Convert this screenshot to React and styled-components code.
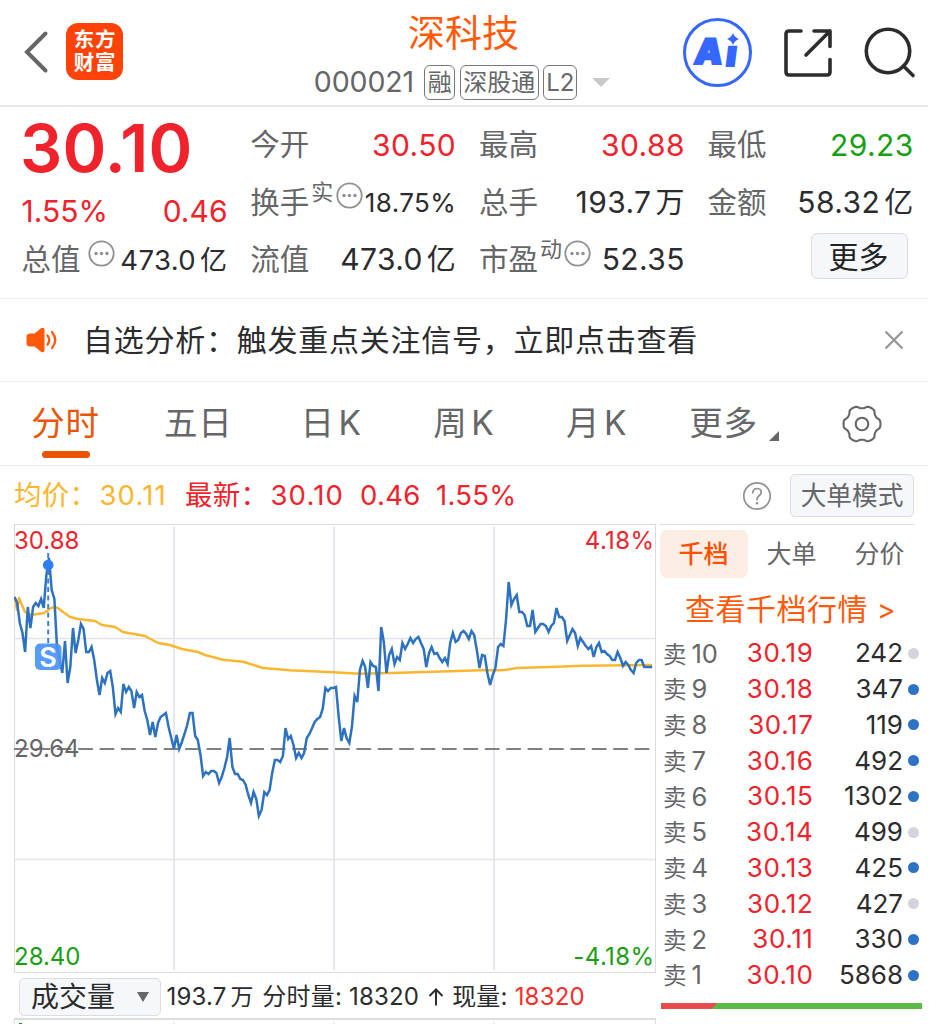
import styled, { createGlobalStyle } from 'styled-components'

const GlobalStyle = createGlobalStyle`
  * {
    box-sizing: border-box;
  }
  body {
    margin: 0;
    background: #fff;
    overflow: hidden;
    font-family: 'Inter', 'Noto Sans CJK SC', sans-serif;
    color: #2b2c2e;
  }
`

const RED = '#f0222b'
const GREEN = '#17a012'
const GRAY = '#656668'

// one value per trading minute, pixels below the top of the chart
const MINUTES = [
  73, 79, 99, 109, 128, 83, 104, 83, 79, 82, 75, 84, 51, 34, 66, 75, 123, 136, 149, 117,
  159, 143, 104, 129, 116, 100, 105, 128, 128, 123, 136, 156, 171, 154, 159, 149, 147, 163, 190, 184,
  188, 160, 168, 163, 167, 184, 168, 173, 171, 187, 196, 211, 198, 213, 199, 193, 191, 189, 203, 214,
  225, 211, 225, 218, 210, 201, 189, 189, 212, 216, 231, 252, 248, 250, 247, 247, 249, 259, 253, 244,
  233, 214, 243, 250, 250, 255, 256, 261, 271, 279, 268, 275, 292, 286, 268, 271, 266, 249, 236, 236,
  238, 232, 204, 215, 212, 221, 234, 229, 234, 229, 214, 210, 204, 198, 195, 193, 185, 164, 167, 164,
  164, 163, 193, 217, 204, 214, 219, 203, 172, 178, 146, 137, 143, 164, 138, 142, 143, 167, 103, 118,
  149, 131, 125, 140, 133, 136, 119, 125, 120, 114, 119, 115, 113, 119, 125, 143, 129, 123, 130, 129,
  134, 138, 134, 140, 119, 109, 118, 116, 109, 107, 110, 115, 107, 111, 126, 144, 131, 132, 149, 161,
  151, 144, 123, 120, 122, 96, 58, 81, 75, 71, 88, 88, 91, 102, 102, 86, 108, 104, 100, 100,
  102, 108, 102, 99, 84, 93, 93, 97, 117, 111, 105, 109, 122, 114, 118, 122, 125, 122, 133, 123,
  119, 128, 127, 130, 132, 136, 136, 128, 134, 142, 138, 141, 146, 149, 139, 136, 136, 143, 143, 143, 143,
]

const AVERAGE =
  '1,74 3,86 5,74 7,79 11,88 17,91 30,89 38,83.5 43,83.5 56,93 64,95 81,97 88,101 101,103 109,108 131,112 144,119 156,121 168,125 184,128 191,131 209,135.7 229,137.7 249,144 276,146.3 319,148.3 346,149.7 386,148.7 436,147.3 466,146.3 489,146.3 503,144 543,142.7 569,141.7 638,141'

const ASKS = [
  { level: 10, price: '30.19', volume: 242, active: false },
  { level: 9, price: '30.18', volume: 347, active: true },
  { level: 8, price: '30.17', volume: 119, active: true },
  { level: 7, price: '30.16', volume: 492, active: true },
  { level: 6, price: '30.15', volume: 1302, active: true },
  { level: 5, price: '30.14', volume: 499, active: false },
  { level: 4, price: '30.13', volume: 425, active: true },
  { level: 3, price: '30.12', volume: 427, active: false },
  { level: 2, price: '30.11', volume: 330, active: true },
  { level: 1, price: '30.10', volume: 5868, active: true },
]

const TABS = [
  { text: '分时' },
  { text: '五日' },
  { text: '日', suffix: 'K' },
  { text: '周', suffix: 'K' },
  { text: '月', suffix: 'K' },
]

const MoreDots = () => (
  <DotsIcon width="27" height="27" viewBox="0 0 27 27">
    <circle cx="13.5" cy="13.5" r="12.2" fill="none" stroke="#8f9092" strokeWidth="1.8" />
    <circle cx="8" cy="13.5" r="1.7" fill="#8f9092" />
    <circle cx="13.5" cy="13.5" r="1.7" fill="#8f9092" />
    <circle cx="19" cy="13.5" r="1.7" fill="#8f9092" />
  </DotsIcon>
)

const TopBar = () => (
  <Header>
    <HeaderSide>
      <svg width="26" height="44" viewBox="0 0 26 44">
        <path d="M22.5 3.500 L4 22 L22.500 40.500" fill="none" stroke="#656668" strokeWidth="4" strokeLinecap="round" strokeLinejoin="miter" />
      </svg>
      <Logo>
        <span>东方</span>
        <span>财富</span>
      </Logo>
    </HeaderSide>
    <Title>
      <StockName>深科技</StockName>
      <StockMeta>
        <Code>000021</Code>
        <Badge $width={31}>融</Badge>
        <Badge $width={79}>深股通</Badge>
        <Badge $width={34}>L2</Badge>
        <svg width="18" height="9" viewBox="0 0 18 9">
          <path d="M0 0 H18 L9 9 Z" fill="#c9c9cb" />
        </svg>
      </StockMeta>
    </Title>
    <Actions>
      <AiButton>
        <AiText>A<span>ı</span></AiText>
        <AiStar width="12" height="12" viewBox="0 0 12 12">
          <path d="M6 0 Q7.6 4.4 12 6 Q7.6 7.6 6 12 Q4.4 7.6 0 6 Q4.4 4.4 6 0 Z" fill="#3566ff" />
        </AiStar>
      </AiButton>
      <svg width="50" height="50" viewBox="0 0 50 50" fill="none" stroke="#2b2c2e" strokeWidth="3.6" strokeLinecap="round" strokeLinejoin="round">
        <path d="M18 3 H6 Q3 3 3 6 V44 Q3 47 6 47 H44 Q47 47 47 44 V31.500" />
        <path d="M31 3 H47 V18.500 M47 3 L23 27" />
      </svg>
      <svg width="52" height="52" viewBox="0 0 52 52" fill="none" stroke="#2b2c2e" strokeWidth="3.6" strokeLinecap="round">
        <circle cx="24" cy="24" r="21.700" />
        <path d="M39.500 39 L49 48.500" />
      </svg>
    </Actions>
  </Header>
)

const Quote = () => (
  <QuotePanel>
    <QuoteColumn>
      <BigPrice>30.10</BigPrice>
      <Change>
        <span>1.55%</span>
        <span>0.46</span>
      </Change>
      <QuoteRow>
        <Label>总值</Label>
        <MoreDots />
        <Value $size={27.5} $low>473.0<Unit $size={27}>亿</Unit></Value>
      </QuoteRow>
    </QuoteColumn>
    <QuoteColumn>
      <QuoteRow>
        <Label>今开</Label>
        <Value $color={RED}>30.50</Value>
      </QuoteRow>
      <QuoteRow>
        <Label>换手<Sup>实</Sup></Label>
        <MoreDots />
        <Value $size={26} $low>18.75%</Value>
      </QuoteRow>
      <QuoteRow>
        <Label>流值</Label>
        <Value>473.0<Unit>亿</Unit></Value>
      </QuoteRow>
    </QuoteColumn>
    <QuoteColumn>
      <QuoteRow>
        <Label>最高</Label>
        <Value $color={RED}>30.88</Value>
      </QuoteRow>
      <QuoteRow>
        <Label>总手</Label>
        <Value>193.7<Unit>万</Unit></Value>
      </QuoteRow>
      <QuoteRow>
        <Label>市盈<Sup>动</Sup></Label>
        <MoreDots />
        <Value>52.35</Value>
      </QuoteRow>
    </QuoteColumn>
    <QuoteColumn>
      <QuoteRow>
        <Label>最低</Label>
        <Value $color={GREEN}>29.23</Value>
      </QuoteRow>
      <QuoteRow>
        <Label>金额</Label>
        <Value>58.32<Unit>亿</Unit></Value>
      </QuoteRow>
      <QuoteRow>
        <MoreButton>更多</MoreButton>
      </QuoteRow>
    </QuoteColumn>
  </QuotePanel>
)

const Notice = () => (
  <NoticeBar>
    <svg width="32" height="26" viewBox="0 0 32 26">
      <path d="M4 6.500 H8.500 L15 1.300 Q18.500 -0.500 18.500 3 V23 Q18.500 26.500 15 24.700 L8.500 19.500 H4 Q0.500 19.500 0.500 16 V10 Q0.500 6.500 4 6.500 Z" fill="#ff5a0a" />
      <path d="M21.500 8.500 Q25 13 21.500 17.500 M26 5 Q32.500 13 26 21" fill="none" stroke="#ff5a0a" strokeWidth="2.300" strokeLinecap="round" />
    </svg>
    <NoticeText>自选分析：触发重点关注信号，立即点击查看</NoticeText>
    <svg width="20" height="20" viewBox="0 0 20 20">
      <path d="M1.500 1.500 L18.500 18.500 M18.500 1.500 L1.500 18.500" stroke="#98999b" strokeWidth="2.400" />
    </svg>
  </NoticeBar>
)

// six rounded teeth with narrow notches between them
const gearPath = () => {
  const points = []
  for (let a = 0; a <= 360; a += 4) {
    const t = (a * Math.PI) / 180
    const r = 17 + 1.5 * Math.tanh(1.8 * Math.cos(6 * t) + 0.5)
    points.push(`${(20 + r * Math.cos(t)).toFixed(2)},${(20 + r * Math.sin(t)).toFixed(2)}`)
  }
  return points.join(' ')
}

const PeriodTabs = () => (
  <TabBar>
    {TABS.map((tab, i) => (
      <Tab key={tab.text} $active={i === 0}>
        {tab.text}
        {tab.suffix && <TabSuffix>{tab.suffix}</TabSuffix>}
      </Tab>
    ))}
    <MoreTab>
      更多
      <Corner width="10" height="10" viewBox="0 0 10 10">
        <path d="M10 0 V10 H0 Z" fill="#656668" />
      </Corner>
    </MoreTab>
    <Tab>
      <svg width="40" height="40" viewBox="0 0 40 40" fill="none" stroke="#656668" strokeWidth="2.100">
        <polygon points={gearPath()} strokeLinejoin="round" />
        <circle cx="20" cy="20" r="6.300" />
      </svg>
    </Tab>
  </TabBar>
)

const Summary = () => (
  <SummaryRow>
    <SummaryText $color="#fbb62f" $width={171}>均价：<b>30.11</b></SummaryText>
    <SummaryText $color={RED} $width={175}>最新：<b>30.10</b></SummaryText>
    <SummaryText $color={RED} $width={76}>0.46</SummaryText>
    <SummaryText $color={RED}>1.55%</SummaryText>
    <Help width="30" height="30" viewBox="0 0 30 30" fill="none" stroke="#8f9092" strokeWidth="1.700">
      <circle cx="15" cy="15" r="13.200" />
      <path d="M10.800 11.700 Q11 7.500 15.200 7.500 Q19.300 7.700 19.200 11.400 Q19.100 13.300 17 14.800 Q15 16.300 15 18.700" strokeLinecap="round" />
      <circle cx="15" cy="22.200" r="1.300" fill="#8f9092" stroke="none" />
    </Help>
    <ModeButton>大单模式</ModeButton>
  </SummaryRow>
)

const Chart = () => (
  <ChartBox>
    <svg width="642" height="449" viewBox="0 0 642 449" fill="none">
      <path d="M0 .5 H642 M0 448.500 H642" stroke="#d9dbdf" />
      <path d="M0 114.500 H642 M0 335.500 H642" stroke="#e2e4ea" strokeWidth="1.500" />
      <path d="M.5 0 V449 M641.500 0 V449" stroke="#d9dbdf" />
      <path d="M160 3 V446 M320 3 V446 M480 3 V446" stroke="#e4e5ea" strokeWidth="1.800" />
      <path d="M0 225 H637" stroke="#808080" strokeWidth="2" strokeDasharray="14.7 6.7" />
      <polyline points={AVERAGE} stroke="#fbb62f" strokeWidth="2.500" strokeLinejoin="round" />
      <polyline
        points={MINUTES.map((y, i) => `${(0.5 + i * 2.657).toFixed(1)},${y}`).join(' ')}
        stroke="#2d72c0"
        strokeWidth="2.500"
      />
      <path d="M34.200 29 V120" stroke="#3a80e0" strokeWidth="2" strokeDasharray="5 3.500" />
      <circle cx="34.200" cy="41" r="5.300" fill="#2f7df0" />
      <rect x="21" y="119.500" width="26.500" height="26.500" rx="5" fill="#4b93fa" fillOpacity=".92" />
      <SellMark x="34" y="142.500">S</SellMark>
    </svg>
    <AxisLabel $top={5} $color={RED}>30.88</AxisLabel>
    <AxisLabel $top={5} $color={RED} $right>4.18%</AxisLabel>
    <AxisLabel $top={212.5} $color={GRAY}>29.64</AxisLabel>
    <AxisLabel $top={420.5} $color={GREEN}>28.40</AxisLabel>
    <AxisLabel $top={420.5} $color={GREEN} $right>-4.18%</AxisLabel>
  </ChartBox>
)

const Volume = () => (
  <>
    <VolumeRow>
      <VolumeSelect>
        成交量
        <svg width="12" height="10" viewBox="0 0 12 10">
          <path d="M0 0 H12 L6 10 Z" fill="#656668" />
        </svg>
      </VolumeSelect>
      <VolumeText>193.7<Unit $size={23}>万</Unit></VolumeText>
      <VolumeText>分时量: 18320</VolumeText>
      <svg width="16" height="18" viewBox="0 0 16 18" fill="none" stroke="#2b2c2e" strokeWidth="2">
        <path d="M8 17.500 V1.500 M1.500 8 L8 1.500 L14.500 8" />
      </svg>
      <VolumeText>现量: <em>18320</em></VolumeText>
    </VolumeRow>
    <VolumeChart width="642" height="7" viewBox="0 0 642 7">
      <path d="M0 1 H642" stroke="#dcdde0" strokeWidth="2" />
      <path d="M.5 1 V7 M160 4 V7 M320 4 V7 M480 4 V7 M641.500 1 V7" stroke="#d9dbdf" />
      <path d="M5 5 H8 V7 H5 Z" fill="#17a012" />
    </VolumeChart>
  </>
)

const OrderBook = () => (
  <Book>
    <BookTabs>
      <BookTab $active>千档</BookTab>
      <BookTab>大单</BookTab>
      <BookTab>分价</BookTab>
    </BookTabs>
    <BookLink>查看千档行情 <i>&gt;</i></BookLink>
    {ASKS.map((ask) => (
      <AskRow key={ask.level}>
        <AskLevel>卖<span>{ask.level}</span></AskLevel>
        <AskPrice>{ask.price}</AskPrice>
        <AskVolume>{ask.volume}</AskVolume>
        <Dot $active={ask.active} />
      </AskRow>
    ))}
    <Ratio />
  </Book>
)

const App = () => {
  return (
    <Page>
      <GlobalStyle />
      <TopBar />
      <Quote />
      <Notice />
      <PeriodTabs />
      <Summary />
      <Body>
        <ChartColumn>
          <Chart />
          <Volume />
        </ChartColumn>
        <OrderBook />
      </Body>
    </Page>
  )
}

export default App

const Page = styled.div`
  width: 928px;
  height: 1024px;
  overflow: hidden;
  line-height: 1;
  white-space: nowrap;
`

const Header = styled.header`
  display: grid;
  grid-template-columns: 307px 312px 1fr;
  height: 107px;
  border-bottom: 2px solid #e9e9ea;
`

const HeaderSide = styled.div`
  display: flex;
  align-items: center;
  gap: 17px;
  padding-left: 23px;
  height: 103px;
`

const Logo = styled.div`
  display: flex;
  flex-direction: column;
  align-items: center;
  justify-content: center;
  gap: 3px;
  width: 57px;
  height: 57px;
  padding-left: 1px;
  border-radius: 12px;
  background: #ff4208;
  color: #fff;
  font-size: 20.5px;
  font-weight: 700;
  letter-spacing: 0.8px;
`

const Title = styled.div`
  display: flex;
  flex-direction: column;
  align-items: center;
  padding-top: 14px;
`

const StockName = styled.div`
  height: 40px;
  padding-left: 1px;
  line-height: 40px;
  font-size: 37px;
  color: #ff5a0a;
`

const StockMeta = styled.div`
  display: flex;
  align-items: center;
  margin-top: 11px;
  margin-right: 2px;
  height: 35px;
  color: ${GRAY};
  & > svg {
    margin-left: 15px;
  }
`

const Code = styled.span`
  width: 106px;
  font-size: 28.5px;
  letter-spacing: -0.1px;
`

const Badge = styled.span`
  display: flex;
  align-items: center;
  justify-content: center;
  width: ${(p) => p.$width}px;
  height: 35px;
  margin-left: 4.5px;
  border: 1.5px solid #77787a;
  border-radius: 6px;
  font-size: 24px;
`

const Actions = styled.div`
  display: flex;
  align-items: center;
  justify-content: flex-end;
  gap: 31px;
  height: 105px;
  padding-right: 12px;
`

const AiButton = styled.div`
  position: relative;
  display: flex;
  align-items: center;
  justify-content: center;
  width: 69px;
  height: 69px;
  border: 3.5px solid #3566ff;
  border-radius: 50%;
  color: #3566ff;
`

const AiText = styled.span`
  font-size: 35px;
  font-weight: 900;
  transform: skewX(-7deg);
  margin: -2px 3px 0 0;
  -webkit-text-stroke: 2.2px #3566ff;
  & > span {
    display: inline-block;
    margin-left: 4px;
    transform: translateY(2px);
  }
`

const AiStar = styled.svg`
  position: absolute;
  top: 12px;
  right: 10px;
`

const QuotePanel = styled.section`
  display: grid;
  grid-template-columns: repeat(4, 206px);
  column-gap: 22.7px;
  height: 192px;
  padding: 9px 0 0 21.5px;
  border-bottom: 1px solid #ededee;
`

const QuoteColumn = styled.div`
  display: flex;
  flex-direction: column;
`

const BigPrice = styled.div`
  height: 68px;
  margin-left: -1.5px;
  line-height: 65px;
  font-size: 66.5px;
  font-weight: 600;
  letter-spacing: 0.2px;
  color: ${RED};
`

const Change = styled.div`
  display: flex;
  align-items: center;
  justify-content: space-between;
  height: 47px;
  padding-top: 7px;
  font-size: 30px;
  color: ${RED};
`

const QuoteRow = styled.div`
  display: flex;
  align-items: center;
  height: 57.3px;
`

const Label = styled.span`
  display: flex;
  padding-top: 1px;
  font-size: 29.5px;
  color: ${GRAY};
`

const Sup = styled.sup`
  font-size: 22px;
  line-height: 22px;
  margin: -7px 0 0 2px;
`

const DotsIcon = styled.svg`
  margin: -12px 0 0 7px;
  ${Label}:has(${Sup}) + & {
    margin-left: 2.5px;
  }
`

const Value = styled.span`
  margin-left: auto;
  padding-top: ${(p) => (p.$low ? 3 : 0)}px;
  font-size: ${(p) => p.$size || 30}px;
  letter-spacing: 0.4px;
  color: ${(p) => p.$color || '#2b2c2e'};
`

const Unit = styled.span`
  margin-left: 4px;
  font-size: ${(p) => p.$size || 29}px;
`

const MoreButton = styled.button`
  width: 97px;
  height: 46px;
  margin: -6px 6px 0 auto;
  padding: 1px 1px 0 0;
  border: 1.5px solid #dcdde3;
  border-radius: 6px;
  background: #f6f7fa;
  color: #222325;
  font: inherit;
  font-size: 30px;
`

const NoticeBar = styled.div`
  display: flex;
  align-items: center;
  height: 83px;
  padding: 0 24px 0 26px;
  border-bottom: 1px solid #ededee;
`

const NoticeText = styled.div`
  flex: 1;
  padding-left: 25px;
  font-size: 30px;
  letter-spacing: 0.75px;
`

const TabBar = styled.nav`
  display: grid;
  grid-template-columns: repeat(7, 132.8px);
  height: 84px;
  border-bottom: 1px solid #ededee;
`

const Tab = styled.div`
  position: relative;
  display: flex;
  align-items: center;
  justify-content: center;
  padding-right: 2px;
  font-size: 33.5px;
  letter-spacing: 0.6px;
  color: ${(p) => (p.$active ? '#ea5504' : GRAY)};
  &::after {
    content: '';
    display: ${(p) => (p.$active ? 'block' : 'none')};
    position: absolute;
    left: 42px;
    bottom: 7px;
    width: 48px;
    height: 7px;
    border-radius: 3.5px;
    background: #ea5504;
  }
`

const MoreTab = styled(Tab)`
  padding: 0 0 0 8px;
`

const TabSuffix = styled.span`
  margin-left: 4px;
`

const Corner = styled.svg`
  margin: 24px 0 0 12px;
`

const SummaryRow = styled.div`
  display: flex;
  align-items: center;
  height: 58px;
  padding: 1px 14px 0;
`

const SummaryText = styled.span`
  width: ${(p) => (p.$width ? p.$width + 'px' : 'auto')};
  font-size: 27.5px;
  letter-spacing: 0.3px;
  color: ${(p) => p.$color};
  & > b {
    margin-left: 2px;
    font-weight: 400;
    letter-spacing: 1.2px;
  }
`

const Help = styled.svg`
  margin-left: auto;
`

const ModeButton = styled.button`
  width: 124px;
  height: 43px;
  margin-left: 18px;
  padding: 1px 0 0;
  border: 1.5px solid #dcdde3;
  border-radius: 5px;
  background: #f6f7fa;
  color: ${GRAY};
  font: inherit;
  font-size: 25.7px;
`

const Body = styled.div`
  display: flex;
  height: 500px;
  padding-left: 14px;
`

const ChartColumn = styled.div`
  width: 642px;
`

const ChartBox = styled.div`
  position: relative;
  height: 449px;
  & > svg {
    display: block;
  }
`

const AxisLabel = styled.span`
  position: absolute;
  top: ${(p) => p.$top}px;
  ${(p) => (p.$right ? 'right: 1.5px; letter-spacing: 0.4px;' : 'left: 0;')}
  font-size: 24px;
  line-height: 24px;
  color: ${(p) => p.$color};
`

const SellMark = styled.text`
  fill: #fff;
  font-size: 27px;
  font-weight: 600;
  text-anchor: middle;
`

const VolumeRow = styled.div`
  display: flex;
  align-items: center;
  gap: 8.5px;
  height: 45px;
  padding: 2px 0 0 5px;
`

const VolumeSelect = styled.div`
  display: flex;
  align-items: center;
  justify-content: space-between;
  width: 142px;
  height: 38px;
  margin-right: -3px;
  padding: 0 11px;
  border: 1.5px solid #dcdde3;
  border-radius: 5px;
  background: #f6f7fa;
  font-size: 28px;
`

const VolumeText = styled.span`
  padding-top: 1px;
  font-size: 24px;
  letter-spacing: 0.2px;
  & > em {
    font-style: normal;
    color: #fb2c2c;
  }
`

const VolumeChart = styled.svg`
  display: block;
`

const Book = styled.aside`
  width: 272px;
  padding-left: 4px;
`

const BookTabs = styled.div`
  display: grid;
  grid-template-columns: repeat(3, 88px);
  width: 254px;
  height: 53px;
  padding-top: 5px;
  border-top: 1px solid #d9dbdf;
`

const BookTab = styled.div`
  display: flex;
  align-items: center;
  justify-content: center;
  height: 48px;
  padding-right: 1px;
  border-radius: 7px;
  font-size: 25px;
  font-weight: ${(p) => (p.$active ? 500 : 400)};
  color: ${(p) => (p.$active ? '#ff5000' : GRAY)};
  background: ${(p) => (p.$active ? '#fdeee5' : 'transparent')};
`

const BookLink = styled.div`
  height: 58.5px;
  padding: 17px 0 0 25px;
  font-size: 30px;
  letter-spacing: 0.5px;
  color: #ff5a0a;
  & > i {
    font-style: normal;
    font-size: 28px;
  }
`

const AskRow = styled.div`
  display: grid;
  grid-template-columns: 70px 80.5px 89.5px 16px;
  align-items: center;
  height: 35.75px;
  padding-left: 3px;
  font-size: 26px;
`

const AskLevel = styled.span`
  font-size: 23.5px;
  color: ${GRAY};
  & > span {
    margin-left: 5px;
    font-size: 25.5px;
  }
`

const AskPrice = styled.span`
  text-align: right;
  letter-spacing: 0.6px;
  color: ${RED};
`

const AskVolume = styled.span`
  text-align: right;
`

const Dot = styled.span`
  width: 11px;
  height: 11px;
  margin-left: 5px;
  border-radius: 50%;
  background: ${(p) => (p.$active ? '#2d72c6' : '#d3d4dc')};
`

const Ratio = styled.div`
  width: 261px;
  height: 6px;
  margin: 10px 0 0 1px;
  background: linear-gradient(135deg, #e94b4b 39.5px, #5ab947 40px);
`
